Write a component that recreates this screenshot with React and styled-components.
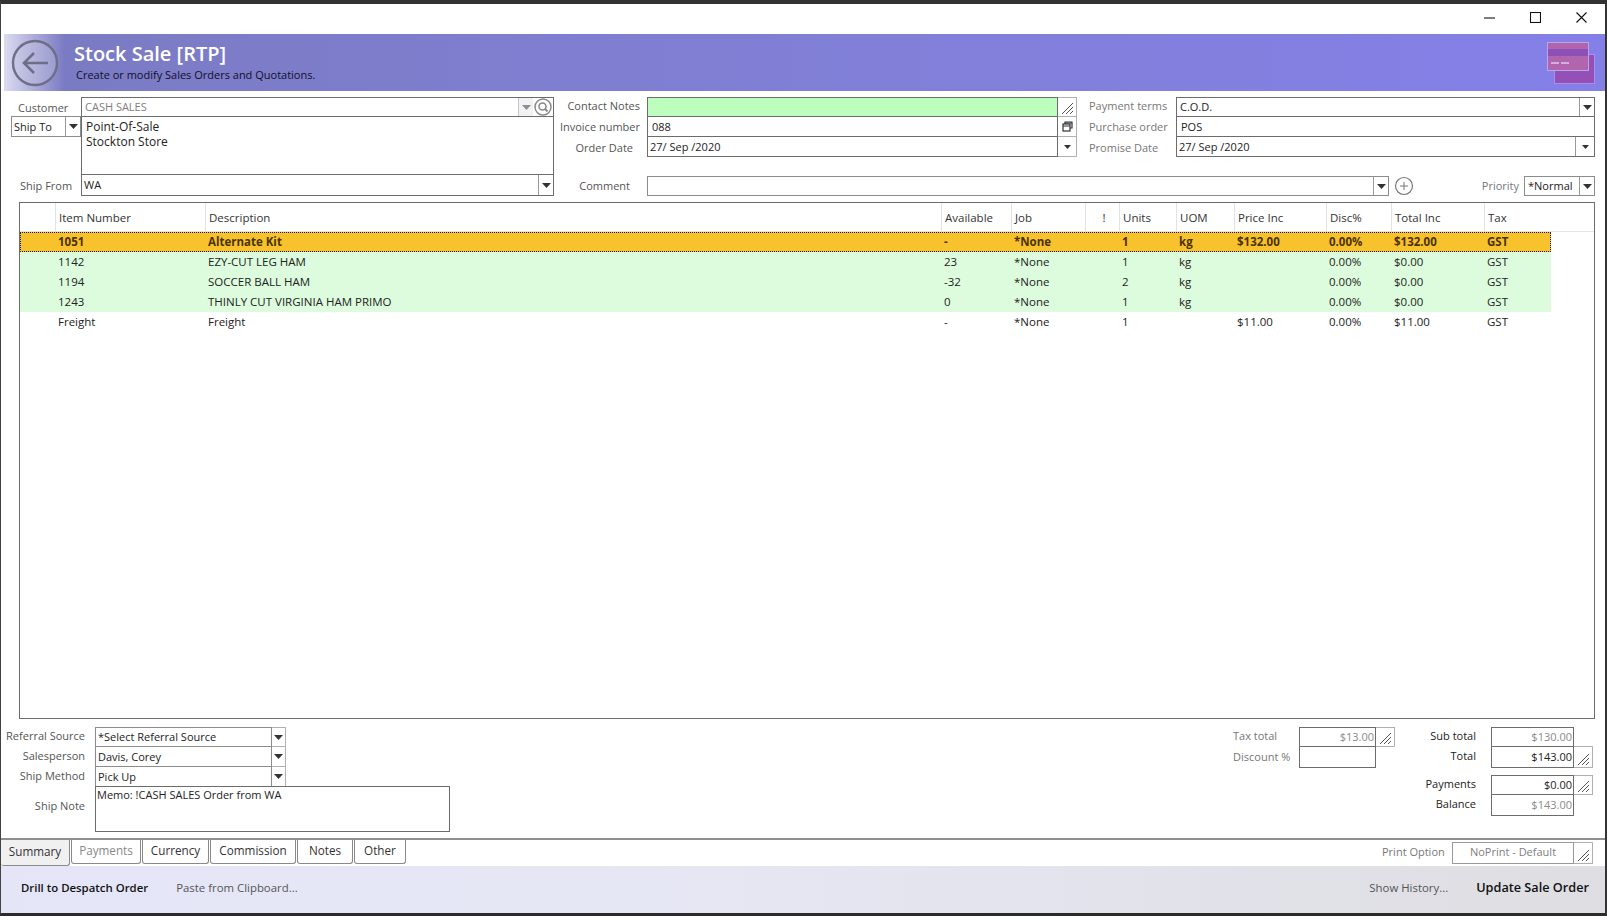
import React from 'react';
import styled, { createGlobalStyle } from 'styled-components';

const Global = createGlobalStyle`
  html, body { margin: 0; padding: 0; background: #fff; }
  body { font-family: "Open Sans", "Noto Sans", sans-serif; font-size: 12px; color: #222; }
`;

const COLS = '35px 150px 736px 70px 74px 34px 57px 58px 92px 65px 93px 67px';

const lines = [
  { no: '1051', desc: 'Alternate Kit', avail: '-', units: '1', uom: 'kg', price: '$132.00', total: '$132.00', kind: 'active' },
  { no: '1142', desc: 'EZY-CUT LEG HAM', avail: '23', units: '1', uom: 'kg', price: '', total: '$0.00', kind: 'stock' },
  { no: '1194', desc: 'SOCCER BALL HAM', avail: '-32', units: '2', uom: 'kg', price: '', total: '$0.00', kind: 'stock' },
  { no: '1243', desc: 'THINLY CUT VIRGINIA HAM PRIMO', avail: '0', units: '1', uom: 'kg', price: '', total: '$0.00', kind: 'stock' },
  { no: 'Freight', desc: 'Freight', avail: '-', units: '1', uom: '', price: '$11.00', total: '$11.00', kind: 'plain' },
];

const Arrow = ({ small }) => (
  <svg width={small ? 7 : 9} height={small ? 4 : 5} viewBox="0 0 9 5"><path d="M0 0h9L4.5 5z" fill="#333" /></svg>
);

const Hatch = () => (
  <svg width="13" height="13" viewBox="0 0 13 13" fill="none" stroke="#555" strokeWidth="1">
    <path d="M1 12L12 1M5 12l7-7M9 12l3-3" />
  </svg>
);

const Restore = () => (
  <svg width="11" height="11" viewBox="0 0 11 11" fill="none" stroke="#333" strokeWidth="1.2">
    <path d="M3 3V1h7v6H8" />
    <rect x="1" y="3" width="7" height="7" />
    <path d="M1 5h7M3 2h7" />
  </svg>
);

const Window = styled.div`
  box-sizing: border-box;
  width: 1607px;
  height: 916px;
  display: flex;
  flex-direction: column;
  overflow: hidden;
  background: #fff;
  border-top: 4px solid #333;
  border-left: 1px solid #444;
  border-right: 2px solid #333;
  border-bottom: 3px solid #2b2b2b;
`;

const TitleBar = styled.div`
  height: 30px;
  flex: none;
  box-sizing: border-box;
  display: flex;
  justify-content: flex-end;
  align-items: center;
  gap: 35px;
  padding: 0 18px 3px 0;
`;

const WinIcon = styled.svg`
  width: 11px;
  height: 11px;
  fill: none;
  stroke: #111;
  stroke-width: 1.1;
`;

const Header = styled.header`
  height: 57px;
  flex: none;
  box-sizing: border-box;
  margin-left: 3px;
  display: flex;
  align-items: center;
  padding-left: 7px;
  background: linear-gradient(90deg, #dcdcf0 0, #7b7bc4 60px, #807fd4 45%, #8580e8 100%);
`;

const TitleBlock = styled.div`
  margin-left: 15px;
  margin-bottom: 2px;
  display: flex;
  flex-direction: column;
`;

const Title = styled.h1`
  margin: 0;
  font-size: 20px;
  line-height: 27px;
  font-weight: 600;
  color: #fff;
`;

const Subtitle = styled.div`
  margin-left: 2px;
  font-size: 11px;
  line-height: 16px;
  color: #10102a;
`;

const Logo = styled.svg`
  margin-left: auto;
  margin-right: 10px;
  flex: none;
`;

const Form = styled.section`
  flex: none;
  height: 111px;
  box-sizing: border-box;
  padding: 6px 10px 0 10px;
  display: grid;
  grid-template-columns: 543px 1fr;
`;

const LeftBlock = styled.div`
  display: grid;
  grid-template-columns: 70px 473px;
  grid-template-rows: 20px 20px 38px 21px;
  align-self: start;
`;

const Label = styled.label`
  color: ${p => p.$dim ? '#777' : '#555'};
  font-size: 11px;
  white-space: nowrap;
  display: flex;
  align-items: center;
  justify-content: ${p => p.$right ? 'flex-end' : 'flex-start'};
  padding-left: ${p => p.$pl || 0}px;
  padding-right: ${p => p.$pr || 0}px;
  padding-bottom: ${p => p.$pb ?? 2}px;
`;

const Field = styled.div`
  box-sizing: border-box;
  display: flex;
  align-items: stretch;
  min-width: 0;
  border: 1px solid ${p => p.$light ? '#8c8c8c' : '#6c6c6c'};
  margin-top: ${p => p.$stack ? '-1px' : 0};
  background: ${p => p.$bg || '#fff'};
  color: ${p => p.$muted ? '#808080' : '#222'};
  font-size: 11px;
  line-height: 18px;
`;

const Value = styled.span`
  flex: 1;
  min-width: 0;
  padding-left: ${p => p.$pl ?? 2}px;
  white-space: nowrap;
  display: flex;
  align-items: center;
`;

const DropBtn = styled.span`
  flex: none;
  width: ${p => p.$w || 14}px;
  display: flex;
  align-items: center;
  justify-content: center;
  border-left: 1px solid #9a9a9a;
  background: ${p => p.$shade ? '#e8e8ee' : '#fff'};
  opacity: ${p => p.$shade ? 0.55 : 1};
`;

const AddressBox = styled(Field)`
  grid-column: 2;
  grid-row: 2 / span 2;
  margin-top: -1px;
  display: block;
  padding: 2px 4px;
  font-size: 12px;
  line-height: 15px;
`;

const Side = styled.div`
  display: flex;
  flex-direction: column;
`;

const TopFields = styled.div`
  display: grid;
  grid-template-columns: 93px 411px 19px 99px 1fr;
  grid-template-rows: 20px 20px 20px;
`;

const SideBtn = styled.span`
  box-sizing: border-box;
  display: flex;
  align-items: ${p => p.$end ? 'flex-end' : 'center'};
  justify-content: center;
  border: 1px solid #b0b0b0;
  border-left: 0;
  margin-top: ${p => p.$stack ? '-1px' : 0};
  padding-bottom: ${p => p.$end ? 1 : 0}px;
  background: #fff;
`;

const CommentRow = styled.div`
  margin-top: 19px;
  height: 20px;
  display: grid;
  grid-template-columns: 93px 742px 29px 1fr 71px;
`;

const AddBtn = styled.span`
  display: flex;
  align-items: center;
  justify-content: center;
  width: ${p => p.$w ? `${p.$w}px` : 'auto'};
`;

const LineGrid = styled.section`
  flex: 1;
  min-height: 0;
  margin: 0 10px 0 18px;
  border: 1px solid #6c6c6c;
  display: flex;
  flex-direction: column;
`;

const GridRow = styled.div`
  display: grid;
  grid-template-columns: ${COLS};
  width: max-content;
  height: ${p => p.$head ? 28 : 20}px;
  flex: none;
  box-sizing: border-box;
  background: ${p => p.$kind === 'active' ? '#f7c22c' : p.$kind === 'stock' ? '#ddfcdd' : '#fff'};
  font-weight: ${p => p.$kind === 'active' ? 700 : 400};
  color: ${p => p.$kind === 'active' ? '#4a3200' : '#222'};
  outline: ${p => p.$kind === 'active' ? '1px dotted #222' : 'none'};
  outline-offset: -1px;
`;

const HeadStrip = styled.div`
  border-bottom: 1px solid #e4e4e4;
  flex: none;
`;

const HeadCell = styled.div`
  padding-left: 3px;
  border-left: ${p => p.$first ? 0 : '1px solid #e2e2e2'};
  display: flex;
  align-items: center;
  justify-content: ${p => p.$center ? 'center' : 'flex-start'};
  font-size: 11.5px;
  color: #333;
  white-space: nowrap;
  overflow: hidden;
`;

const Cell = styled.div`
  padding: 0 0 2px 2px;
  margin-left: 1px;
  display: flex;
  align-items: center;
  font-size: 11.5px;
  white-space: nowrap;
`;

const Lower = styled.section`
  flex: none;
  height: 119px;
  box-sizing: border-box;
  padding: 8px 12px 0 0;
  display: flex;
`;

const LowerLeft = styled.div`
  display: grid;
  grid-template-columns: 94px 177px 14px 164px;
  grid-template-rows: 20px 20px 20px 45px;
`;

const LabelGap = styled(Label)`
  padding-right: 10px;
  padding-bottom: ${p => p.$pb ?? 3}px;
`;

const NoteBox = styled(Field)`
  grid-column: 2 / span 3;
  display: block;
  padding-left: 1px;
  margin-top: -1px;
  line-height: 16px;
`;

const TaxBlock = styled.div`
  margin-left: auto;
  display: grid;
  grid-template-columns: 66px 77px 19px;
  grid-template-rows: 20px 21px;
`;

const TotalsBlock = styled.div`
  margin-left: 22px;
  display: grid;
  grid-template-columns: 74px 83px 19px;
  grid-template-rows: 20px 21px 7px 20px 21px;
`;

const Amount = styled(Field)`
  justify-content: flex-end;
  align-items: center;
  padding-right: 1px;
  color: ${p => p.$muted ? '#8a8a8a' : '#222'};
`;

const TotalLabel = styled(Label)`
  color: #222;
  justify-content: flex-end;
  padding-right: 15px;
  padding-bottom: 4px;
`;

const Spacer = styled.div`
  grid-column: 1 / -1;
`;

const TabBar = styled.div`
  flex: none;
  height: 28px;
  box-sizing: border-box;
  border-top: 2px solid #8e8e8e;
  display: flex;
  align-items: flex-start;
  padding-right: 12px;
`;

const Tab = styled.div`
  box-sizing: border-box;
  height: ${p => p.$active ? 26 : 24}px;
  width: ${p => p.$w}px;
  margin-right: 1px;
  padding-bottom: 3px;
  display: flex;
  align-items: center;
  justify-content: center;
  font-size: 11.7px;
  color: ${p => p.$disabled ? '#888' : '#333'};
  background: ${p => p.$active ? '#f0f0f0' : '#fff'};
  border: 1px solid #8a8a8a;
  border-top: 0;
  border-left: ${p => p.$active ? 0 : '1px solid #8a8a8a'};
  border-radius: 0 0 3px 3px;
`;

const PrintBox = styled.div`
  margin-left: auto;
  margin-top: 2px;
  display: grid;
  grid-template-columns: 70px 122px 19px;
  height: 21px;
`;

const PrintValue = styled(Field)`
  justify-content: center;
  align-items: center;
  padding-bottom: 2px;
  color: #808080;
  border-color: #999;
`;

const Footer = styled.footer`
  flex: none;
  height: 47px;
  box-sizing: border-box;
  display: flex;
  align-items: center;
  padding: 0 16px 5px 20px;
  background: linear-gradient(90deg, #e4e6f8 0, #e6e7f4 40%, #dedee2 100%);
`;

const Action = styled.span`
  font-size: ${p => p.$big ? 12.7 : 11.4}px;
  font-weight: ${p => p.$bold ? 600 : 400};
  color: ${p => p.$bold ? '#111' : '#555'};
  margin-left: ${p => p.$ml || 0}px;
  white-space: nowrap;
`;

const PushedAction = styled(Action)`
  margin-left: auto;
`;

export default function App() {
  return (
    <Window>
      <Global />
      <TitleBar>
        <WinIcon viewBox="0 0 11 11"><path d="M0 6h11" /></WinIcon>
        <WinIcon viewBox="0 0 11 11"><rect x="0.5" y="0.5" width="10" height="10" /></WinIcon>
        <WinIcon viewBox="0 0 11 11"><path d="M0.5 0.5l10 10M10.5 0.5l-10 10" /></WinIcon>
      </TitleBar>

      <Header>
        <svg width="48" height="48" viewBox="0 0 48 48" fill="none" stroke="#6e6e86" strokeWidth="2.4">
          <circle cx="24" cy="24" r="22" fill="#c4c4e0" fillOpacity="0.35" />
          <path d="M37 24H13M23 14l-10 10 10 10" strokeWidth="2.6" />
        </svg>
        <TitleBlock>
          <Title>Stock Sale [RTP]</Title>
          <Subtitle>Create or modify Sales Orders and Quotations.</Subtitle>
        </TitleBlock>
        <Logo width="48" height="42" viewBox="0 0 48 42">
          <rect x="7.5" y="12.5" width="40" height="29" fill="#9550b8" stroke="#a98fe8" />
          <rect x="0.5" y="0.5" width="41" height="28" fill="#b065ac" stroke="#b7a6ee" />
          <rect x="1" y="7" width="40" height="7" fill="#8c50b8" />
          <path d="M4 21h8M14 21h8" stroke="#d8c8f0" strokeWidth="1.5" />
        </Logo>
      </Header>

      <Form>
        <LeftBlock>
          <Label $pl={7} $pb={0}>Customer</Label>
          <Field $muted>
            <Value $pl={3}>CASH SALES</Value>
            <DropBtn $shade><Arrow /></DropBtn>
            <AddBtn $w={20}>
              <svg width="18" height="18" viewBox="0 0 18 18" fill="none" stroke="#8a8a8a">
                <circle cx="9" cy="9" r="8" strokeWidth="1.5" />
                <circle cx="8.5" cy="8.5" r="3.5" strokeWidth="1.6" />
                <path d="M11 11l2.5 2.5" strokeWidth="1.8" />
              </svg>
            </AddBtn>
          </Field>
          <Field $light $stack>
            <Value>Ship To</Value>
            <DropBtn><Arrow /></DropBtn>
          </Field>
          <AddressBox>Point-Of-Sale<br />Stockton Store</AddressBox>
          <span />
          <Label $pl={9} $pb={0}>Ship From</Label>
          <Field $stack>
            <Value>WA</Value>
            <DropBtn><Arrow /></DropBtn>
          </Field>
        </LeftBlock>

        <Side>
          <TopFields>
            <Label $right $pr={7} $pb={3}>Contact Notes</Label>
            <Field $bg="#bdfdbd" />
            <SideBtn $end><Hatch /></SideBtn>
            <Label $pl={12} $dim $pb={3}>Payment terms</Label>
            <Field>
              <Value $pl={3}>C.O.D.</Value>
              <DropBtn><Arrow /></DropBtn>
            </Field>

            <Label $right $pr={7}>Invoice number</Label>
            <Field $stack><Value $pl={4}>088</Value></Field>
            <SideBtn $stack><Restore /></SideBtn>
            <Label $pl={12} $dim>Purchase order</Label>
            <Field $stack><Value $pl={4}>POS</Value></Field>

            <Label $right $pr={14} $pb={0}>Order Date</Label>
            <Field $stack>
              <Value>27/ Sep /2020</Value>
            </Field>
            <SideBtn $stack><Arrow small /></SideBtn>
            <Label $pl={12} $dim $pb={0}>Promise Date</Label>
            <Field $stack>
              <Value>27/ Sep /2020</Value>
              <DropBtn $w={18}><Arrow small /></DropBtn>
            </Field>
          </TopFields>

          <CommentRow>
            <Label $right $pr={17}>Comment</Label>
            <Field $light>
              <Value />
              <DropBtn><Arrow /></DropBtn>
            </Field>
            <AddBtn>
              <svg width="20" height="20" viewBox="0 0 20 20" fill="none" stroke="#777">
                <circle cx="10" cy="10" r="8.5" strokeWidth="1.2" />
                <path d="M10 6v8M6 10h8" />
              </svg>
            </AddBtn>
            <Label $right $pr={5} $dim>Priority</Label>
            <Field $light>
              <Value $pl={3}>*Normal</Value>
              <DropBtn><Arrow /></DropBtn>
            </Field>
          </CommentRow>
        </Side>
      </Form>

      <LineGrid>
        <HeadStrip>
          <GridRow $head>
            <HeadCell $first />
            {['Item Number', 'Description', 'Available', 'Job', '!', 'Units', 'UOM', 'Price Inc', 'Disc%', 'Total Inc', 'Tax'].map(h => (
              <HeadCell key={h} $center={h === '!'}>{h}</HeadCell>
            ))}
          </GridRow>
        </HeadStrip>
        {lines.map(line => (
          <GridRow key={line.no} $kind={line.kind}>
            <Cell />
            <Cell>{line.no}</Cell>
            <Cell>{line.desc}</Cell>
            <Cell>{line.avail}</Cell>
            <Cell>*None</Cell>
            <Cell />
            <Cell>{line.units}</Cell>
            <Cell>{line.uom}</Cell>
            <Cell>{line.price}</Cell>
            <Cell>0.00%</Cell>
            <Cell>{line.total}</Cell>
            <Cell>GST</Cell>
          </GridRow>
        ))}
      </LineGrid>

      <Lower>
        <LowerLeft>
          <LabelGap $right>Referral Source</LabelGap>
          <Field $light><Value>*Select Referral Source</Value></Field>
          <SideBtn><Arrow /></SideBtn>
          <span />
          <LabelGap $right>Salesperson</LabelGap>
          <Field $light $stack><Value>Davis, Corey</Value></Field>
          <SideBtn $stack><Arrow /></SideBtn>
          <span />
          <LabelGap $right>Ship Method</LabelGap>
          <Field $light $stack><Value>Pick Up</Value></Field>
          <SideBtn $stack><Arrow /></SideBtn>
          <span />
          <LabelGap $right $pb={9}>Ship Note</LabelGap>
          <NoteBox>Memo: !CASH SALES Order from WA</NoteBox>
        </LowerLeft>

        <TaxBlock>
          <Label $dim $pb={4}>Tax total</Label>
          <Amount $muted>$13.00</Amount>
          <SideBtn $end><Hatch /></SideBtn>
          <Label $dim $pb={3}>Discount %</Label>
          <Amount $stack />
        </TaxBlock>

        <TotalsBlock>
          <TotalLabel>Sub total</TotalLabel>
          <Amount $muted>$130.00</Amount>
          <span />
          <TotalLabel>Total</TotalLabel>
          <Amount $stack>$143.00</Amount>
          <SideBtn $stack $end><Hatch /></SideBtn>
          <Spacer />
          <TotalLabel>Payments</TotalLabel>
          <Amount>$0.00</Amount>
          <SideBtn $end><Hatch /></SideBtn>
          <TotalLabel>Balance</TotalLabel>
          <Amount $muted $stack>$143.00</Amount>
        </TotalsBlock>
      </Lower>

      <TabBar>
        <Tab $active $w={69}>Summary</Tab>
        <Tab $disabled $w={70}>Payments</Tab>
        <Tab $w={67}>Currency</Tab>
        <Tab $w={86}>Commission</Tab>
        <Tab $w={56}>Notes</Tab>
        <Tab $w={52}>Other</Tab>
        <PrintBox>
          <Label $dim $pb={4}>Print Option</Label>
          <PrintValue>NoPrint - Default</PrintValue>
          <SideBtn $end><Hatch /></SideBtn>
        </PrintBox>
      </TabBar>

      <Footer>
        <Action $bold>Drill to Despatch Order</Action>
        <Action $ml={28}>Paste from Clipboard...</Action>
        <PushedAction>Show History...</PushedAction>
        <Action $bold $big $ml={28}>Update Sale Order</Action>
      </Footer>
    </Window>
  );
}
